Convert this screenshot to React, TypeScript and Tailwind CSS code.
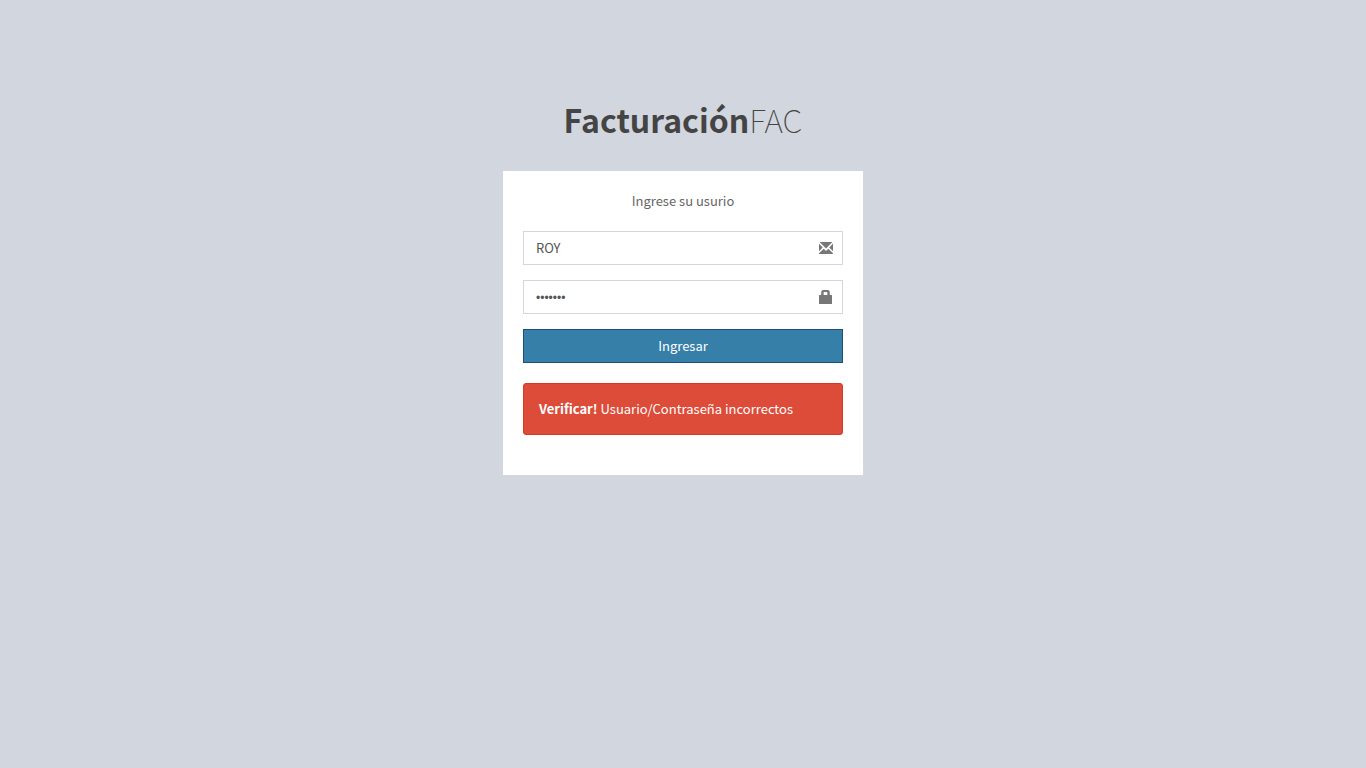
import { useState } from "react";

function EnvelopeIcon() {
  return (
    <svg viewBox="0 0 14 12" className="h-3 w-[14px]" fill="currentColor" aria-hidden="true">
      <path d="M0.6 0H13.4L7 6.5Z" />
      <path d="M0 1.6L3.7 5.6L0 9.3Z" />
      <path d="M14 1.6L10.3 5.6L14 9.3Z" />
      <path d="M0 12V11.2L4.7 6.7L7 9.1L9.3 6.7L14 11.2V12Z" />
    </svg>
  );
}

function LockIcon() {
  return (
    <svg viewBox="0 0 14 14" className="h-[14px] w-[14px]" fill="currentColor" aria-hidden="true">
      <path
        fillRule="evenodd"
        d="M0 5.4Q0 5 0.4 5H2.2V2Q2.4 0 4.2 0H8.8Q10.6 0 10.8 2V5H12.6Q13 5 13 5.4V13.6Q13 14 12.6 14H0.4Q0 14 0 13.6ZM4.6 5H8.4V2.6Q8.3 2 7.8 2H5.2Q4.7 2 4.6 2.6Z"
      />
    </svg>
  );
}

const fieldClass =
  "block h-[34px] w-full border border-[#d2d6de] bg-white pr-[42px] pl-3 text-[#555] outline-none focus:border-[#3c8dbc]";
const iconClass =
  "pointer-events-none absolute top-0 right-0 flex h-[34px] w-[34px] items-center justify-center text-[#777]";

export default function App() {
  const [user, setUser] = useState("ROY");
  const [password, setPassword] = useState("1234567");

  return (
    <div className="flex min-h-screen flex-col items-center bg-[#d2d6de] px-4 pt-24 pb-8 font-['Noto_Sans_CJK_SC',sans-serif] text-[13px] leading-5 text-[#333]">
      <main className="w-full max-w-[360px]">
        <h1 className="mb-[29px] text-center text-[32px] leading-[46px] font-thin text-[#444]">
          <a href="#">
            <b className="font-bold">Facturación</b>FAC
          </a>
        </h1>
        <section className="bg-white px-5 pt-5 pb-10 text-[#666]">
          <p className="pb-5 text-center">Ingrese su usurio</p>
          <form onSubmit={(e) => e.preventDefault()}>
            <div className="relative mb-[15px]">
              <input
                type="text"
                aria-label="Usuario"
                className={`${fieldClass} pb-[2px]`}
                value={user}
                onChange={(e) => setUser(e.target.value)}
              />
              <span className={iconClass}>
                <EnvelopeIcon />
              </span>
            </div>
            <div className="relative mb-[15px]">
              <input
                type="password"
                aria-label="Contraseña"
                className={`${fieldClass} pt-[2px] font-['Liberation_Sans',sans-serif] text-[12px]`}
                value={password}
                onChange={(e) => setPassword(e.target.value)}
              />
              <span className={iconClass}>
                <LockIcon />
              </span>
            </div>
            <button
              type="submit"
              className="block h-[34px] w-full border border-[#204d74] bg-[#367fa9] text-center text-white"
            >
              Ingresar
            </button>
          </form>
          <div
            role="alert"
            className="mt-5 rounded-[3px] border border-[#d73925] bg-[#dd4b39] px-[15px] py-[15px] text-white"
          >
            <strong className="font-bold">Verificar!</strong> Usuario/Contraseña incorrectos
          </div>
        </section>
      </main>
    </div>
  );
}
